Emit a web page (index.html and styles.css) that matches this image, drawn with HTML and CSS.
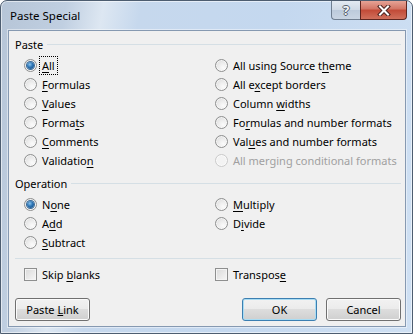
FILE: index.html
```html
<!DOCTYPE html>
<html lang="en">
<head>
  <meta charset="UTF-8">
  <title>Paste Special</title>
  <link rel="stylesheet" href="styles.css">
</head>
<body>

<div class="window">
  <!-- Title bar -->
  <div class="titlebar">
    <span class="title">Paste Special</span>
    <div class="caption-btns">
      <span class="cap-help">?</span>
      <span class="cap-close">
        <svg width="14" height="11" viewBox="0 0 14 11">
          <path d="M3 1.5 L11 9.5 M11 1.5 L3 9.5" stroke="#4a2420" stroke-width="4" stroke-linecap="square"/>
          <path d="M3 1.5 L11 9.5 M11 1.5 L3 9.5" stroke="#fff" stroke-width="2" stroke-linecap="square"/>
        </svg>
      </span>
    </div>
  </div>

  <div class="client">
    <!-- Paste group -->
    <div class="group-head"><span>Paste</span><i class="rule"></i></div>
    <div class="opts">
      <div class="col">
        <div class="opt"><span class="radio on"></span><span class="focus"><u>A</u>ll</span></div>
        <div class="opt"><span class="radio"></span><span><u>F</u>ormulas</span></div>
        <div class="opt"><span class="radio"></span><span><u>V</u>alues</span></div>
        <div class="opt"><span class="radio"></span><span>Forma<u>t</u>s</span></div>
        <div class="opt"><span class="radio"></span><span><u>C</u>omments</span></div>
        <div class="opt"><span class="radio"></span><span>Validatio<u>n</u></span></div>
      </div>
      <div class="col">
        <div class="opt"><span class="radio"></span><span>All using Source t<u>h</u>eme</span></div>
        <div class="opt"><span class="radio"></span><span>All e<u>x</u>cept borders</span></div>
        <div class="opt"><span class="radio"></span><span>Column <u>w</u>idths</span></div>
        <div class="opt"><span class="radio"></span><span>Fo<u>r</u>mulas and number formats</span></div>
        <div class="opt"><span class="radio"></span><span>Val<u>u</u>es and number formats</span></div>
        <div class="opt disabled"><span class="radio"></span><span>All merging conditional formats</span></div>
      </div>
    </div>

    <!-- Operation group -->
    <div class="group-head op-head"><span>Operation</span><i class="rule"></i></div>
    <div class="opts">
      <div class="col">
        <div class="opt"><span class="radio on"></span><span>N<u>o</u>ne</span></div>
        <div class="opt"><span class="radio"></span><span>A<u>d</u>d</span></div>
        <div class="opt"><span class="radio"></span><span><u>S</u>ubtract</span></div>
      </div>
      <div class="col">
        <div class="opt"><span class="radio"></span><span><u>M</u>ultiply</span></div>
        <div class="opt"><span class="radio"></span><span>D<u>i</u>vide</span></div>
      </div>
    </div>

    <div class="sep"></div>

    <div class="opts checks">
      <div class="col">
        <div class="opt"><span class="check"></span><span>Skip <u>b</u>lanks</span></div>
      </div>
      <div class="col">
        <div class="opt"><span class="check"></span><span>Transpos<u>e</u></span></div>
      </div>
    </div>

    <!-- Buttons -->
    <div class="buttons">
      <button class="btn">Paste <u>L</u>ink</button>
      <button class="btn default push">OK</button>
      <button class="btn">Cancel</button>
    </div>
  </div>
</div>

</body>
</html>
```

FILE: styles.css
```css
* {
  box-sizing: border-box;
}
body {
  margin: 0;
  font-family: "Noto Sans", sans-serif;
  font-size: 11px;
  color: #000;
  background: #fff;
}
.window {
  width: 413px;
  height: 334px;
  border: 1px solid #4d5d70;
  border-radius: 7px 7px 0 0;
  padding: 0 6px 6px 7px;
  display: flex;
  flex-direction: column;
  background: linear-gradient(100deg, #b6c5d7 0%, #c0cfe1 14%, #dde7f2 22%, #c6d8ed 30%, #c4d8ef 60%, #cfe0f3 100%);
  box-shadow: inset 0 0 0 1px rgba(255,255,255,0.55);
}
.titlebar {
  height: 29px;
  display: flex;
  justify-content: space-between;
  align-items: flex-start;
}
.title {
  padding-left: 2px;
  line-height: 29px;
  font-size: 11.5px;
  color: #000;
}
.caption-btns {
  display: flex;
  margin-right: -1px;
  height: 19px;
}
.cap-help {
  width: 29px;
  height: 19px;
  border: 1px solid #6f7e90;
  border-top: none;
  border-right: none;
  border-radius: 0 0 0 4px;
  background: linear-gradient(#e3eaf2, #cfd9e5 50%, #bccadb 50%, #c9d5e3);
  color: #f4f6f8;
  font-weight: bold;
  font-size: 13px;
  line-height: 18px;
  text-align: center;
  text-shadow: -1px 0 #55606c, 1px 0 #55606c, 0 -1px #55606c, 0 1px #55606c;
}
.cap-close {
  width: 47px;
  height: 19px;
  border: 1px solid #5e2620;
  border-top: none;
  border-radius: 0 0 4px 0;
  background: linear-gradient(#e6a396, #d27464 45%, #c24a37 50%, #d0705c);
  display: flex;
  align-items: center;
  justify-content: center;
}
.client {
  flex: 1;
  background: #f0f0f0;
  border: 1px solid #8699b1;
  padding: 5px 4px 0 6px;
  box-shadow: 0 0 0 1px rgba(255,255,255,0.45);
}
.group-head {
  display: flex;
  align-items: center;
  height: 16px;
  gap: 4px;
}
.group-head .rule {
  flex: 1;
  height: 1px;
  background: #d5dfe5;
}
.op-head {
  margin-top: 5px;
}
.opts {
  display: flex;
  margin-top: 4px;
  padding-left: 9px;
}
.opts .col:first-child {
  width: 191px;
}
.opt {
  display: flex;
  align-items: center;
  height: 19px;
  gap: 5px;
}
.opt u {
  text-underline-offset: 2px;
}
.focus {
  outline: 1px dotted #000;
  outline-offset: 1px;
  padding: 0 1px;
  margin-left: -1px;
}
.radio {
  width: 13px;
  height: 13px;
  border-radius: 50%;
  border: 1px solid #8e8f8f;
  background: radial-gradient(circle at 65% 70%, #fbfbfb 0%, #ececec 45%, #d6d6d6 100%);
  box-shadow: inset 0 0 0 1px rgba(255,255,255,0.6);
  display: flex;
  align-items: center;
  justify-content: center;
  flex: none;
}
.radio.on::after {
  content: "";
  width: 7px;
  height: 7px;
  border-radius: 50%;
  background: radial-gradient(circle at 40% 35%, #8bc4ee 0%, #2c74b4 45%, #12467c 100%);
  box-shadow: 0 0 0 1px #3c6b97;
}
.disabled {
  color: #a0a0a0;
}
.disabled .radio {
  border-color: #cacaca;
  background: #f3f3f3;
}
.sep {
  margin-top: 6px;
  height: 1px;
  background: #d5dfe5;
}
.checks {
  margin-top: 6px;
}
.check {
  width: 13px;
  height: 13px;
  border: 1px solid #8e8f8f;
  background: linear-gradient(135deg, #d9d9d9, #f7f7f7);
  box-shadow: inset 0 0 0 1px #f4f4f4;
  flex: none;
}
.buttons {
  display: flex;
  margin-top: 14px;
  gap: 9px;
}
.push {
  margin-left: auto;
}
.btn {
  width: 75px;
  height: 23px;
  padding: 0;
  font-family: "Noto Sans", sans-serif;
  font-size: 11px;
  color: #000;
  border: 1px solid #707070;
  border-radius: 3px;
  background: linear-gradient(#f2f2f2 0%, #ebebeb 50%, #dddddd 50%, #cfcfcf 100%);
  box-shadow: inset 0 0 0 1px #fbfbfb;
}
.btn.default {
  border-color: #3c7fb1;
  box-shadow: inset 0 0 0 1px #a9dcf3;
}
```
